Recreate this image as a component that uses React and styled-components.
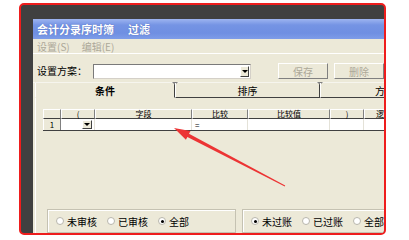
import React from 'react';
import styled, { createGlobalStyle } from 'styled-components';

const GlobalStyle = createGlobalStyle`
  html, body {
    margin: 0;
    padding: 0;
    background: #ffffff;
  }
  body {
    font-family: "Noto Sans CJK SC", "Liberation Sans", sans-serif;
  }
`;

const Page = styled.div`
  position: relative;
  width: 409px;
  height: 240px;
  overflow: hidden;
`;

const Frame = styled.div`
  box-sizing: border-box;
  margin: 3px 0 0 19px;
  width: 367px;
  height: 232px;
  border: 2px solid #ee1d1d;
  border-radius: 5px;
  background: #404040;
  padding: 14px 0 0 12px;
  overflow: hidden;
  display: flex;
`;

const Window = styled.div`
  flex: 1;
  min-width: 0;
  display: flex;
  flex-direction: column;
  background: #ece9d8;
`;

const TitleBar = styled.div`
  height: 20px;
  flex-shrink: 0;
  display: flex;
  align-items: center;
  gap: 14px;
  padding-left: 4px;
  background: linear-gradient(to bottom, #9db4f0 0%, #7594e4 30%, #6f8fe2 70%, #7e9ce8 100%);
  color: #ffffff;
  font-size: 11px;
  font-weight: 700;
  text-shadow: 0 0 1px rgba(40, 60, 140, 0.6);
  white-space: nowrap;
`;

const MenuBar = styled.div`
  height: 14px;
  flex-shrink: 0;
  display: flex;
  align-items: center;
  gap: 12px;
  padding-left: 4px;
  font-size: 10px;
  color: #aca899;
  border-bottom: 1px solid #ffffff;
  white-space: nowrap;
`;

const SchemeRow = styled.div`
  height: 28px;
  flex-shrink: 0;
  display: flex;
  align-items: flex-start;
  padding: 9px 0 0 4px;
  box-sizing: border-box;
  white-space: nowrap;
`;

const Label = styled.span`
  font-size: 10px;
  line-height: 14px;
  margin-top: 1px;
  color: #000000;
`;

const Combo = styled.div`
  box-sizing: border-box;
  margin: 1px 0 0 6px;
  width: 165px;
  height: 15px;
  background: #ffffff;
  border: 1px solid #7a7a7a;
  border-right-color: #d4d0c8;
  border-bottom-color: #d4d0c8;
  display: flex;
  justify-content: flex-end;
  align-items: center;
  padding-right: 1px;
`;

const DropButton = styled.div`
  box-sizing: border-box;
  width: ${p => p.$w || 10}px;
  height: ${p => p.$h || 11}px;
  background: #ece9d8;
  border: 1px solid #ffffff;
  border-right-color: #404040;
  border-bottom-color: #404040;
  display: flex;
  align-items: center;
  justify-content: center;

  &::after {
    content: '';
    border-left: 3px solid transparent;
    border-right: 3px solid transparent;
    border-top: 3px solid #000000;
  }
`;

const Button = styled.div`
  box-sizing: border-box;
  width: 50px;
  height: 16px;
  margin-left: ${p => p.$gap}px;
  border: 1px solid #ffffff;
  border-right-color: #808080;
  border-bottom-color: #808080;
  display: flex;
  align-items: center;
  justify-content: center;
  font-size: 10px;
  color: #aca899;
  flex-shrink: 0;
`;

const TabBar = styled.div`
  height: 16px;
  flex-shrink: 0;
  display: flex;
  padding-left: 2px;
  border-top: 1px solid #f6f5ee;
  box-sizing: border-box;
`;

const Tab = styled.div`
  position: relative;
  box-sizing: border-box;
  width: ${p => p.$w}px;
  flex-shrink: 0;
  display: flex;
  align-items: center;
  justify-content: center;
  font-size: 10px;
  font-weight: ${p => (p.$active ? 700 : 400)};
  color: #000000;
  border-left: 1px solid #ffffff;
  border-right: 1px solid #404040;
  border-bottom: 1px solid ${p => (p.$active ? 'transparent' : '#404040')};
  white-space: nowrap;

  &::before {
    content: '';
    position: absolute;
    top: -1px;
    right: -4px;
    border-left: 3px solid transparent;
    border-right: 3px solid transparent;
    border-top: 3px solid #808080;
  }
`;

const Panel = styled.div`
  flex: 1;
  min-height: 0;
  display: flex;
  flex-direction: column;
  margin-left: 2px;
  border-left: 1px solid #ffffff;
  padding: 11px 0 0 7px;
  overflow: hidden;
`;

const Grid = styled.div`
  display: flex;
  flex-direction: column;
  border-bottom: 1px solid #404040;
  overflow: hidden;
`;

const GridRow = styled.div`
  display: flex;
  height: ${p => p.$h}px;
`;

const HeadCell = styled.div`
  box-sizing: border-box;
  width: ${p => p.$w}px;
  flex-shrink: 0;
  background: #ece9d8;
  border-top: 1px solid #ffffff;
  border-left: 1px solid #ffffff;
  border-right: 1px solid #808080;
  border-bottom: 1px solid #404040;
  display: flex;
  align-items: center;
  justify-content: center;
  font-size: 8px;
  line-height: 8px;
  color: #000000;
  white-space: nowrap;
`;

const Cell = styled.div`
  box-sizing: border-box;
  width: ${p => p.$w}px;
  flex-shrink: 0;
  background: ${p => (p.$header ? '#ece9d8' : '#ffffff')};
  border-right: 1px solid ${p => (p.$header ? '#808080' : '#e4e2d8')};
  border-left: ${p => (p.$header ? '1px solid #ffffff' : 'none')};
  display: flex;
  align-items: center;
  justify-content: ${p => p.$align || 'flex-start'};
  padding: ${p => (p.$pad ? `0 ${p.$pad}px` : 0)};
  font-size: 8px;
  color: #000000;
`;

const Groups = styled.div`
  margin-top: auto;
  margin-left: 4px;
  display: flex;
  gap: 6px;
  height: 24px;
  flex-shrink: 0;
`;

const GroupBox = styled.div`
  box-sizing: border-box;
  width: ${p => p.$w}px;
  flex-shrink: 0;
  height: 24px;
  border: 1px solid #c5c2b2;
  box-shadow: inset 1px 1px 0 #ffffff;
  display: flex;
  align-items: center;
  gap: 10px;
  padding-left: 8px;
  white-space: nowrap;
`;

const RadioItem = styled.div`
  display: flex;
  align-items: center;
  gap: 3px;
  font-size: 10px;
  color: #000000;
`;

const RadioDot = styled.span`
  box-sizing: border-box;
  width: 8px;
  height: 8px;
  border-radius: 50%;
  background: #ffffff;
  border: 1px solid #b8b6ac;
  display: flex;
  align-items: center;
  justify-content: center;

  &::after {
    content: '';
    width: 3px;
    height: 3px;
    border-radius: 50%;
    background: ${p => (p.$checked ? '#000000' : 'transparent')};
  }
`;

const Arrow = styled.svg`
  position: absolute;
  left: 0;
  top: 0;
  pointer-events: none;
`;

const columns = [
  { label: '', w: 18 },
  { label: '(', w: 34 },
  { label: '字段', w: 97 },
  { label: '比较', w: 56 },
  { label: '比较值', w: 82 },
  { label: ')', w: 34 },
  { label: '逻辑', w: 40 },
];

const Radio = ({ checked, children }) => (
  <RadioItem>
    <RadioDot $checked={checked} />
    {children}
  </RadioItem>
);

export default function App() {
  return (
    <Page>
      <GlobalStyle />
      <Frame>
        <Window>
          <TitleBar>
            <span>会计分录序时簿</span>
            <span>过滤</span>
          </TitleBar>
          <MenuBar>
            <span>设置(S)</span>
            <span>编辑(E)</span>
          </MenuBar>
          <SchemeRow>
            <Label>设置方案：</Label>
            <Combo>
              <DropButton $w={9} $h={11} />
            </Combo>
            <Button $gap={27}>保存</Button>
            <Button $gap={6}>删除</Button>
          </SchemeRow>
          <TabBar>
            <Tab $w={140} $active>条件</Tab>
            <Tab $w={145}>排序</Tab>
            <Tab $w={130}>方式</Tab>
          </TabBar>
          <Panel>
            <Grid>
              <GridRow $h={10}>
                {columns.map((c, i) => (
                  <HeadCell key={i} $w={c.w}>{c.label}</HeadCell>
                ))}
              </GridRow>
              <GridRow $h={11}>
                <Cell $w={18} $header $align="center">1</Cell>
                <Cell $w={34} $align="flex-end" $pad={2}>
                  <DropButton $w={10} $h={9} />
                </Cell>
                <Cell $w={97} />
                <Cell $w={56} $pad={3}>=</Cell>
                <Cell $w={82} />
                <Cell $w={34} />
                <Cell $w={40} />
              </GridRow>
            </Grid>
            <Groups>
              <GroupBox $w={189}>
                <Radio>未审核</Radio>
                <Radio>已审核</Radio>
                <Radio checked>全部</Radio>
              </GroupBox>
              <GroupBox $w={160}>
                <Radio checked>未过账</Radio>
                <Radio>已过账</Radio>
                <Radio>全部</Radio>
              </GroupBox>
            </Groups>
          </Panel>
        </Window>
      </Frame>
      <Arrow width="409" height="240" viewBox="0 0 409 240">
        <polygon
          points="174,128 190.5,131 189,133.8 285.2,185.6 284.8,186.4 187.4,137 185.9,139.8"
          fill="#ec3434"
        />
      </Arrow>
    </Page>
  );
}
